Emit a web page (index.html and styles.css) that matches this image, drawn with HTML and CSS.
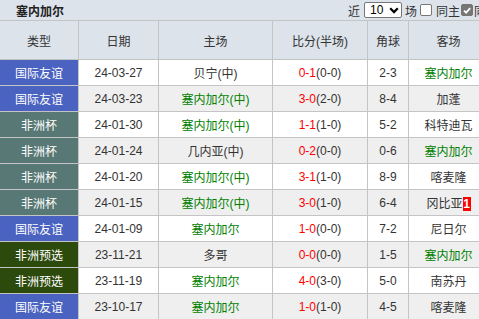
FILE: index.html
```html
<!DOCTYPE html>
<html lang="zh-CN">
<head>
<meta charset="utf-8">
<title>塞内加尔</title>
<link rel="stylesheet" href="styles.css">
</head>
<body>
<div class="wrap">
  <div class="titlebar">
    <span class="team">塞内加尔</span>
    <div class="filters">
      <span class="lbl">近</span>
      <span class="select">10<svg class="chev" width="10" height="7" viewBox="0 0 10 7"><path d="M1.2 1.3 L5 5.1 L8.8 1.3" fill="none" stroke="#000" stroke-width="2.2"/></svg></span>
      <span class="lbl after-select">场</span>
      <span class="cb"></span>
      <span class="lbl after-cb">同主</span>
      <span class="cb checked"><svg width="11" height="11" viewBox="0 0 11 11"><path d="M2.2 5.6 L4.5 7.9 L9 2.8" fill="none" stroke="#fff" stroke-width="2"/></svg></span>
      <span class="lbl tight">同赛事</span>
    </div>
  </div>
  <table class="grid">
    <colgroup>
      <col class="c-type"><col class="c-date"><col class="c-home"><col class="c-score"><col class="c-corner"><col class="c-away">
    </colgroup>
    <thead>
      <tr><th>类型</th><th>日期</th><th>主场</th><th>比分(半场)</th><th>角球</th><th>客场</th></tr>
    </thead>
    <tbody>
      <tr><td class="lg friendly">国际友谊</td><td>24-03-27</td><td>贝宁(中)</td><td><span class="ft">0-1</span>(0-0)</td><td>2-3</td><td class="me">塞内加尔</td></tr>
      <tr><td class="lg friendly">国际友谊</td><td>24-03-23</td><td class="me">塞内加尔(中)</td><td><span class="ft">3-0</span>(2-0)</td><td>8-4</td><td>加蓬</td></tr>
      <tr><td class="lg afcon">非洲杯</td><td>24-01-30</td><td class="me">塞内加尔(中)</td><td><span class="ft">1-1</span>(1-0)</td><td>5-2</td><td>科特迪瓦</td></tr>
      <tr><td class="lg afcon">非洲杯</td><td>24-01-24</td><td>几内亚(中)</td><td><span class="ft">0-2</span>(0-0)</td><td>0-6</td><td class="me">塞内加尔</td></tr>
      <tr><td class="lg afcon">非洲杯</td><td>24-01-20</td><td class="me">塞内加尔(中)</td><td><span class="ft">3-1</span>(1-0)</td><td>8-9</td><td>喀麦隆</td></tr>
      <tr><td class="lg afcon">非洲杯</td><td>24-01-15</td><td class="me">塞内加尔(中)</td><td><span class="ft">3-0</span>(1-0)</td><td>6-4</td><td>冈比亚<span class="red">1</span></td></tr>
      <tr><td class="lg friendly">国际友谊</td><td>24-01-09</td><td class="me">塞内加尔</td><td><span class="ft">1-0</span>(0-0)</td><td>7-2</td><td>尼日尔</td></tr>
      <tr><td class="lg wcq">非洲预选</td><td>23-11-21</td><td>多哥</td><td><span class="ft">0-0</span>(0-0)</td><td>1-5</td><td class="me">塞内加尔</td></tr>
      <tr><td class="lg wcq">非洲预选</td><td>23-11-19</td><td class="me">塞内加尔</td><td><span class="ft">4-0</span>(3-0)</td><td>5-0</td><td>南苏丹</td></tr>
      <tr><td class="lg friendly">国际友谊</td><td>23-10-17</td><td class="me">塞内加尔</td><td><span class="ft">1-0</span>(1-0)</td><td>4-5</td><td>喀麦隆</td></tr>
    </tbody>
  </table>
</div>
</body>
</html>
```
FILE: styles.css
```css
html, body {
  margin: 0;
  padding: 0;
  overflow: hidden;
  background: #fff;
}
body {
  font-family: "Liberation Sans", "Noto Sans CJK SC", sans-serif;
  font-size: 12px;
  color: #333;
}
.wrap {
  width: 510px;
}
.titlebar {
  height: 21px;
  background: #dde3eb;
  border-bottom: 1px solid #c4c4c4;
  display: flex;
  align-items: center;
  justify-content: space-between;
  padding-left: 16px;
  box-sizing: border-box;
}
.team {
  font-weight: bold;
  color: #222;
}
.filters {
  display: flex;
  align-items: center;
  color: #333;
  font-size: 12px;
}
.lbl { white-space: nowrap; }
.select {
  display: inline-flex;
  align-items: center;
  justify-content: space-between;
  width: 38px;
  height: 16px;
  box-sizing: border-box;
  border: 1px solid #767676;
  border-radius: 2px;
  background: #fff;
  padding: 0 2px 0 5px;
  color: #000;
  font-size: 12px;
  margin-left: 4px;
}
.after-select { margin-left: 3px; }
.after-cb { margin-left: 4px; }
.tight { margin-left: 1px; }
.chev { display: block; }
.cb {
  display: inline-flex;
  align-items: center;
  justify-content: center;
  width: 12px;
  height: 12px;
  box-sizing: border-box;
  border: 1px solid #767676;
  border-radius: 2px;
  background: #fff;
  margin-left: 3px;
}
.cb.checked {
  background: #767676;
  border-color: #767676;
  margin-left: 1px;
}
.grid {
  border-collapse: separate;
  border-spacing: 0;
  table-layout: fixed;
  width: 489px;
}
.c-type { width: 79px; }
.c-date { width: 80px; }
.c-home { width: 114px; }
.c-score { width: 95px; }
.c-corner { width: 41px; }
.c-away { width: 80px; }
.grid th, .grid td {
  border-right: 1px solid #c4c4c4;
  border-bottom: 1px solid #c4c4c4;
  text-align: center;
  padding: 0;
  white-space: nowrap;
  overflow: hidden;
}
.grid th {
  height: 38px;
  background: #dde3eb;
  font-weight: normal;
  color: #333;
}
.grid td {
  height: 25px;
}
.grid tbody tr:nth-child(odd) td { background: #fff; }
.grid tbody tr:nth-child(even) td { background: #efefef; }
.grid tbody tr td.lg { color: #fff; }
.grid tbody tr td.friendly { background: #4a62c0; }
.grid tbody tr td.afcon { background: #577874; }
.grid tbody tr td.wcq { background: #2c4a0c; }
.me { color: #008000; }
.ft { color: #f00; }
.red {
  display: inline-block;
  background: #f00;
  color: #fff;
  font-weight: bold;
  width: 8px;
  height: 14px;
  line-height: 14px;
  text-align: center;
  font-size: 12px;
  vertical-align: middle;
}
```
